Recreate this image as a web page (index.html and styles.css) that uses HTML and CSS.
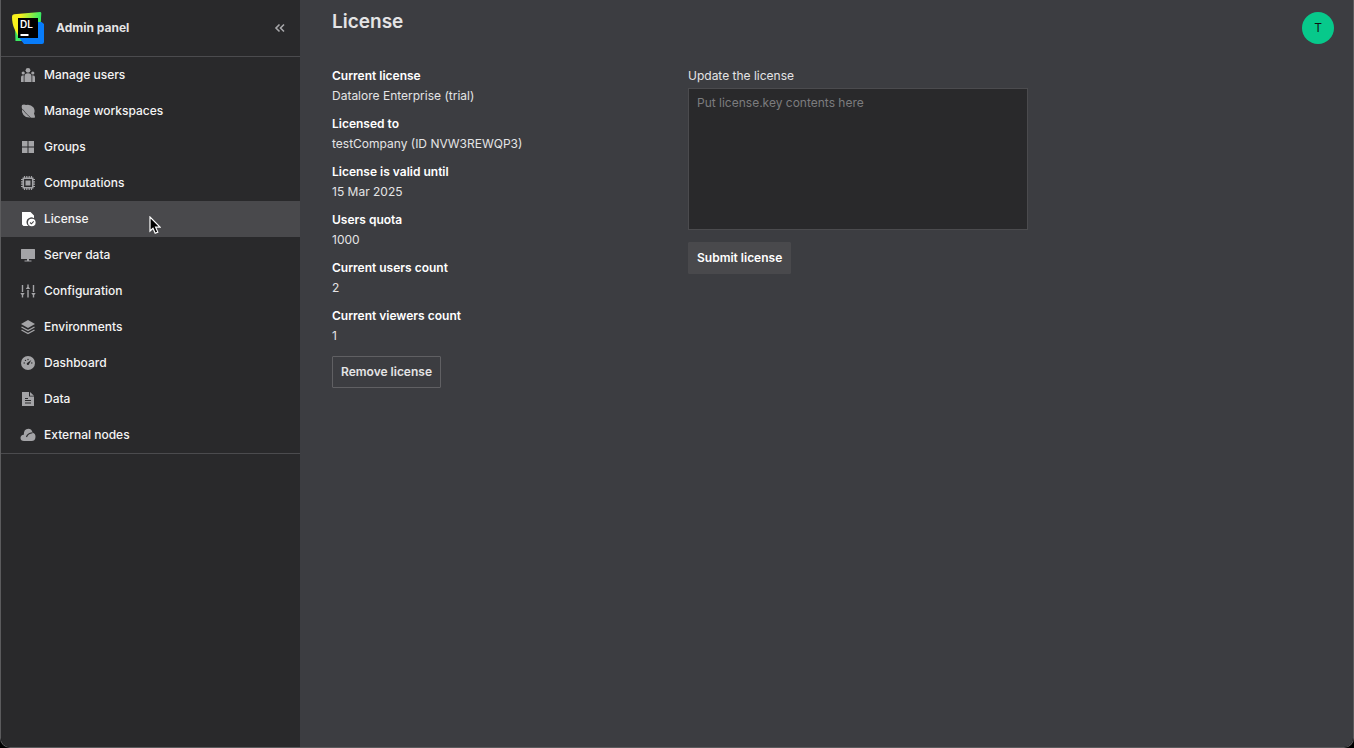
FILE: index.html
```html
<!DOCTYPE html>
<html lang="en">
<head>
<meta charset="utf-8">
<title>Admin panel - License</title>
<link rel="stylesheet" href="styles.css">
</head>
<body>
<div class="window">
  <aside class="sidebar">
    <header class="sidebar-header">
      <svg class="logo" viewBox="0 0 32 32" aria-hidden="true">
        <defs>
          <linearGradient id="lime" x1="0" y1="0" x2="1" y2="0.2">
            <stop offset="0.3" stop-color="#f8f01c"/>
            <stop offset="0.95" stop-color="#3bea62"/>
          </linearGradient>
        </defs>
        <path d="M3 15 3.500 29H14V12Z" fill="#3bea62"/>
        <path d="M0 4.500Q0 2.600 2 2.300L28 0q1.300 0 1.300 1.300L28 24 6 24 2.500 17Q0 12 0 4.500Z" fill="url(#lime)"/>
        <path d="M25 10h4.500L32 12v18q0 2-2 2H12L6.500 25Z" fill="#087cfa"/>
        <path d="M6 6h20v20H6z" fill="#000"/>
        <text class="logo-text" x="8" y="16">DL</text>
        <path d="M8.500 22h8v2h-8z" fill="#fff"/>
      </svg>
      <span class="brand">Admin panel</span>
      <button class="collapse" type="button" aria-label="Collapse sidebar">
        <svg viewBox="0 0 16 16"><path d="M7.500 4.500 4 8l3.500 3.500M12 4.500 8.500 8l3.500 3.500" fill="none" stroke="currentColor" stroke-width="1.600"/></svg>
      </button>
    </header>
    <nav class="nav">
      <a class="nav-item" href="#users">
        <svg viewBox="0 0 16 16"><circle cx="8" cy="3.300" r="2.400"/><circle cx="3.200" cy="6" r="1.600"/><circle cx="12.800" cy="6" r="1.600"/><path d="M4.500 15V9.500Q4.500 6.300 8 6.300t3.500 3.200V15ZM1 15v-4.500Q1 8.200 3.700 8.200V15ZM15 15v-4.500Q15 8.200 12.300 8.200V15Z"/></svg>
        Manage users</a>
      <a class="nav-item" href="#workspaces">
        <svg viewBox="0 0 16 16"><path d="M2 2q2-.8 4 0 4.500-1 7.300 2.300Q15.500 7.500 14 10.500q.9 2 1 4-2.500.5-4.500 0Q6 15 3.500 12 1.200 9 2.200 6 1.200 4 2 2Z"/><path d="M2.300 6q4.200 5.500 8.200 8.500" fill="none" stroke="#29292b" stroke-width=".7"/></svg>
        Manage workspaces</a>
      <a class="nav-item" href="#groups">
        <svg viewBox="0 0 16 16"><path d="M2 2h5.500v5.500H2zM8.500 2H14v5.500H8.500zM2 8.500h5.500V14H2zM8.500 8.500H14V14H8.500z"/></svg>
        Groups</a>
      <a class="nav-item" href="#computations">
        <svg viewBox="0 0 16 16"><path d="M5.500 5.500h5v5h-5z"/><path d="M3.300 3.300h9.400v9.400H3.300z" fill="none" stroke="currentColor" stroke-width="1.600"/><path d="M4.500 1v2M6.800 1v2M9.200 1v2M11.500 1v2M4.500 13v2M6.800 13v2M9.200 13v2M11.500 13v2M1 4.500h2M1 6.800h2M1 9.200h2M1 11.500h2M13 4.500h2M13 6.800h2M13 9.200h2M13 11.500h2" fill="none" stroke="currentColor" stroke-width="1.200"/></svg>
        Computations</a>
      <a class="nav-item active" href="#license" aria-current="page">
        <svg viewBox="0 0 16 16"><path d="M2 1h8.500L14 4.500v2.700A4.500 4.500 0 0 0 8.500 15H3.500L2 13.500Z"/><circle cx="11.800" cy="11.500" r="3.800"/><path d="m10 11.500 1.400 1.300 2.300-2.500" fill="none" stroke="#49494c" stroke-width="1.100"/></svg>
        License</a>
      <a class="nav-item" href="#server">
        <svg viewBox="0 0 16 16"><path d="M1.500 2h13q.5 0 .5.500v9q0 .5-.5.500H9v1.500h2.500v1h-7v-1H7V12H1.500q-.5 0-.5-.5v-9Q1 2 1.500 2Z"/></svg>
        Server data</a>
      <a class="nav-item" href="#configuration">
        <svg viewBox="0 0 16 16"><path d="M2.500 2v7M2.500 12v2.500M8 1.500V4M8 7v7.500M13.500 2v7M13.500 12v2.500" fill="none" stroke="currentColor" stroke-width="1.400"/><path d="M.3 10h4.400l-1.400 2H1.700ZM5.800 6h4.400L8.800 4H7.200ZM11.300 10h4.400l-1.400 2h-1.600Z"/></svg>
        Configuration</a>
      <a class="nav-item" href="#environments">
        <svg viewBox="0 0 16 16"><path d="m8 1 7 4-7 4-7-4Z"/><path d="m1.500 8 6.500 3.500L14.500 8M1.500 11 8 14.500l6.500-3.500" fill="none" stroke="currentColor" stroke-width="1.400"/></svg>
        Environments</a>
      <a class="nav-item" href="#dashboard">
        <svg viewBox="0 0 16 16"><circle cx="8" cy="8" r="7"/><g fill="#29292b"><circle cx="4.200" cy="8" r=".7"/><circle cx="5.500" cy="5.400" r=".7"/><circle cx="8" cy="4.500" r=".7"/><circle cx="11.800" cy="8" r=".7"/><path d="m11.300 5-2.200 4a1.200 1.200 0 1 1-1.700-1.200Z"/></g></svg>
        Dashboard</a>
      <a class="nav-item" href="#data">
        <svg viewBox="0 0 16 16"><path d="M2 1h7v4.500h5V15H2ZM10 1l4 3.700h-4Z"/><path d="M5 7.500h3M5 9.500h6M5 12h6" stroke="#29292b" stroke-width="1.200"/></svg>
        Data</a>
      <a class="nav-item" href="#nodes">
        <svg viewBox="0 0 16 16"><path d="M4 14Q.5 14 .5 11q0-3 3.300-3.300Q3.700 1.700 8.300 1.700q3.600 0 4.200 3.800 3 1 3 4.300 0 4.200-4 4.200Z"/><path d="M6.500 10Q7.500 6.500 12.500 5.800" fill="none" stroke="#29292b" stroke-width="1.100"/></svg>
        External nodes</a>
    </nav>
  </aside>
  <main class="main">
    <header class="main-header">
      <h1 class="title">License</h1>
      <button class="avatar" type="button" aria-label="Account T">T</button>
    </header>
    <div class="columns">
      <section class="details">
        <dl class="facts">
          <div><dt>Current license</dt><dd>Datalore Enterprise (trial)</dd></div>
          <div><dt>Licensed to</dt><dd>testCompany (ID NVW3REWQP3)</dd></div>
          <div><dt>License is valid until</dt><dd>15 Mar 2025</dd></div>
          <div><dt>Users quota</dt><dd>1000</dd></div>
          <div><dt>Current users count</dt><dd>2</dd></div>
          <div><dt>Current viewers count</dt><dd>1</dd></div>
        </dl>
        <button class="button outline" type="button">Remove license</button>
      </section>
      <form class="update">
        <label class="field-label" for="license-key">Update the license</label>
        <textarea class="field" id="license-key" placeholder="Put license.key contents here"></textarea>
        <button class="button solid" type="button">Submit license</button>
      </form>
    </div>
  </main>
</div>
<svg class="cursor" viewBox="0 0 12 18" aria-hidden="true"><path d="M1 1v14l3-2.800 2.200 5 2.600-1.100-2.200-4.900H11Z" fill="#000" stroke="#fff" stroke-width="1.200"/></svg>
</body>
</html>
```
FILE: styles.css
```css
* { box-sizing: border-box; }

body {
  margin: 0;
  background: #000;
  color: #e4e4e5;
  font: 12px/20px Inter, "Liberation Sans", sans-serif;
}

button, textarea { font: inherit; }

.window {
  display: flex;
  min-height: 100vh;
  border: 1px solid #5b5b5d;
  border-top: 0;
  border-radius: 0 0 10px 10px;
  overflow: hidden;
}

.sidebar {
  flex: 0 0 299px;
  background: #29292b;
}

.sidebar-header {
  display: flex;
  align-items: center;
  gap: 12px;
  height: 57px;
  padding: 0 12px 0 11px;
  border-bottom: 1px solid #4b4b4e;
}

.logo { width: 32px; height: 32px; }

.logo-text {
  fill: #fff;
  font: 600 10px Inter, sans-serif;
}

.brand {
  flex: 1;
  font-weight: 700;
}

.collapse {
  display: flex;
  padding: 0;
  border: 0;
  background: none;
  color: #a8a8ab;
}

.collapse svg { width: 16px; height: 16px; }

.nav {
  display: flex;
  flex-direction: column;
  border-bottom: 1px solid #4b4b4e;
}

.nav-item {
  display: flex;
  align-items: center;
  gap: 8px;
  height: 36px;
  padding-left: 19px;
  color: #f4f4f4;
  font-weight: 500;
  text-decoration: none;
}

.nav-item svg {
  width: 16px;
  height: 16px;
  color: #a4a4a7;
  fill: currentColor;
}

.active { background: #49494c; }
.active svg { color: #fff; }

.main {
  flex: 1;
  min-width: 0;
  padding: 12px 19px 24px 32px;
  background: #3c3d41;
}

.main-header {
  display: flex;
  justify-content: space-between;
  align-items: flex-start;
  margin-bottom: 22px;
}

.title {
  margin: 0;
  font-size: 19px;
  font-weight: 600;
  line-height: 20px;
}

.avatar {
  width: 32px;
  height: 32px;
  padding: 0;
  border: 0;
  border-radius: 50%;
  background: #07c98b;
  color: #111;
}

.columns {
  display: grid;
  grid-template-columns: 340px 340px;
  gap: 16px;
}

.facts {
  display: grid;
  gap: 8px;
  margin: 0 0 10px;
}

dt {
  color: #fff;
  font-weight: 600;
}

dd { margin: 0; }

.update {
  display: flex;
  flex-direction: column;
  align-items: flex-start;
}

.field-label { margin-bottom: 2px; }

.field {
  width: 100%;
  height: 142px;
  margin-bottom: 12px;
  padding: 4px 8px;
  border: 1px solid #4b4b4e;
  background: #29292b;
  color: #f4f4f4;
  resize: none;
}

.field::placeholder { color: #7c7c7e; }

.button {
  height: 32px;
  padding: 0 8px;
  border: 1px solid #606063;
  border-radius: 1px;
  background: none;
  color: #e4e4e5;
  font-weight: 600;
}

.solid {
  border-color: #49494c;
  background: #49494c;
  color: #fff;
}

.cursor {
  position: absolute;
  top: 216px;
  left: 149px;
  width: 12px;
  height: 18px;
}
```
